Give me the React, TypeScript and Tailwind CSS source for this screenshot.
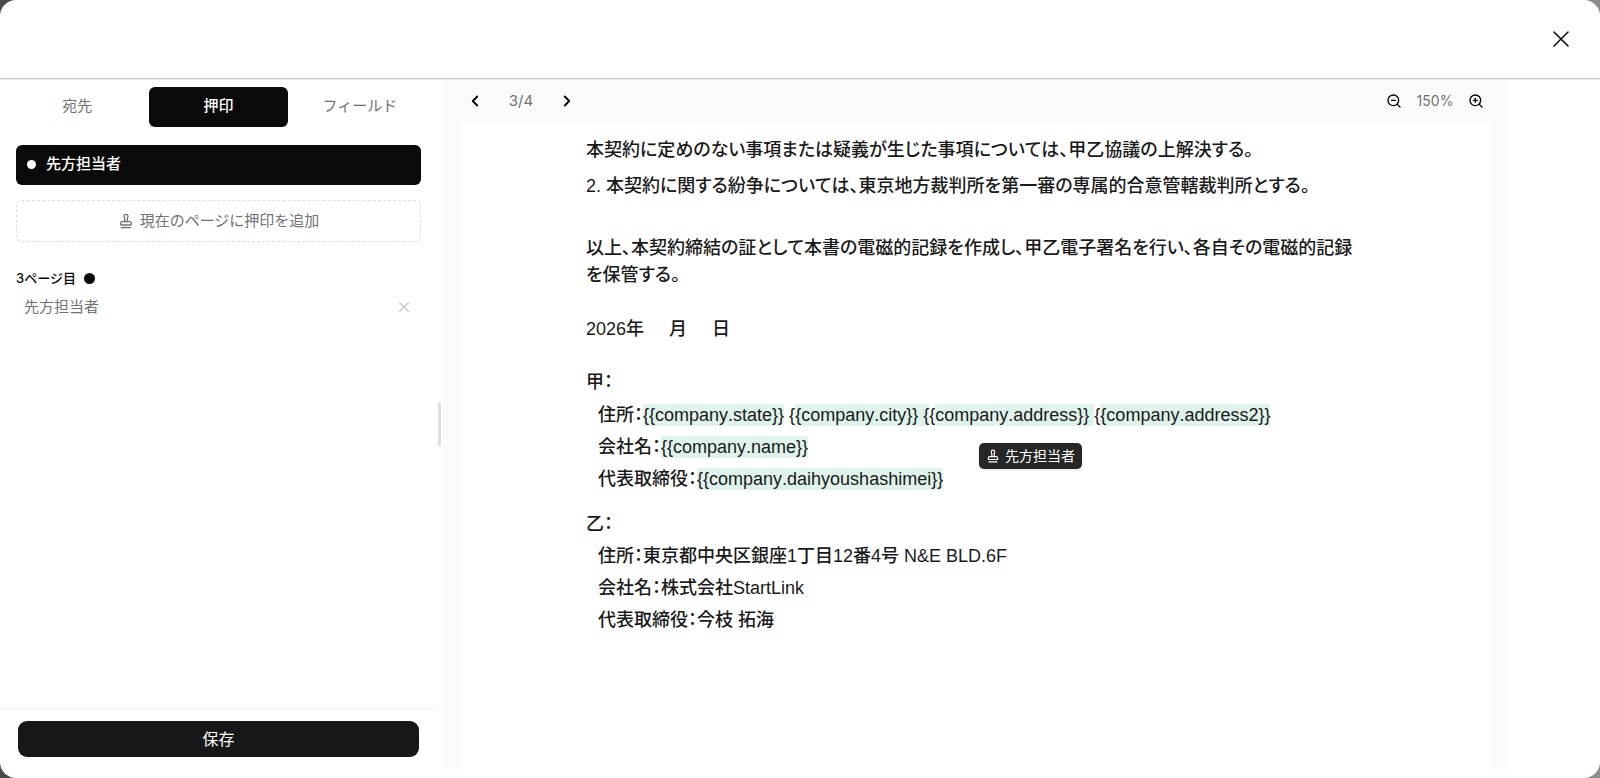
import { useState, type ReactNode } from 'react'
import { ChevronLeft, ChevronRight, Stamp, X, ZoomIn, ZoomOut } from 'lucide-react'

const TABS = ['宛先', '押印', 'フィールド']

function Mark({ children }: { children: ReactNode }) {
  return <span className="bg-[#dff2eb] py-px whitespace-pre">{children}</span>
}

function Sidebar() {
  const [tab, setTab] = useState('押印')

  return (
    <aside className="w-[437px] shrink-0 flex flex-col">
      <div className="grid grid-cols-3 gap-[3px] px-2 pt-[7px]" role="tablist">
        {TABS.map(name => (
          <button
            key={name}
            role="tab"
            aria-selected={tab === name}
            onClick={() => setTab(name)}
            className={
              tab === name
                ? 'h-10 rounded-md bg-[#0a0a0a] pb-[2px] text-[15px] font-medium text-white'
                : 'h-10 rounded-md pb-[2px] text-[15px] text-[#737373]'
            }
          >
            {name}
          </button>
        ))}
      </div>

      <div className="flex-1 px-4 pt-[18px]">
        <button className="w-full h-10 flex items-center gap-[10px] rounded-md bg-[#0a0a0a] px-[11px] pb-px text-[15px] font-medium text-white">
          <span className="size-[9px] rounded-full bg-white" />
          先方担当者
        </button>

        <button className="mt-[15px] w-full h-[42px] flex items-center justify-center gap-[6px] rounded-md border border-dashed border-[#dcdcdc] text-[15px] text-[#737373]">
          <Stamp size={16} />
          現在のページに押印を追加
        </button>

        {/* Stamps placed on this page */}
        <div className="mt-[26px] flex items-center gap-2">
          <h2 className="text-[13px] leading-5 font-medium text-[#0a0a0a]">3ページ目</h2>
          <span className="size-[11px] rounded-full bg-[#0a0a0a]" />
        </div>
        <div className="mt-[7px] flex items-center justify-between px-2">
          <span className="text-[15px] leading-6 text-[#737373]">先方担当者</span>
          <button aria-label="削除" className="text-[#c4c4c4]">
            <X size={18} strokeWidth={1.5} />
          </button>
        </div>
      </div>

      <div className="border-t border-[#f0f0f0] px-[18px] pt-3 pb-[21px]">
        <button className="w-full h-9 rounded-[9px] bg-[#171717] pb-px text-base text-white">保存</button>
      </div>
    </aside>
  )
}

function Toolbar() {
  return (
    <div className="h-[43px] flex items-center justify-between pl-[5px] pr-[6px] pb-px text-black">
      <div className="flex items-center">
        <button aria-label="前のページ"><ChevronLeft size={18} strokeWidth={2.5} /></button>
        <span className="w-[74px] text-center text-[15px] text-[#737373]">3/4</span>
        <button aria-label="次のページ"><ChevronRight size={18} strokeWidth={2.5} /></button>
      </div>
      <div className="flex items-center">
        <button aria-label="縮小"><ZoomOut size={16} /></button>
        <span className="w-[66px] text-center text-sm text-[#737373]">150%</span>
        <button aria-label="拡大"><ZoomIn size={16} /></button>
      </div>
    </div>
  )
}

function ContractPage() {
  return (
    <div className="relative flex-1 bg-white pl-[125px] pt-[14px] font-['Liberation_Sans','Noto_Sans_CJK_JP',sans-serif] text-[18px] leading-[27px] font-medium text-[#1a1a1a] whitespace-nowrap overflow-hidden [font-kerning:none] [font-feature-settings:'palt']">
      <p>本契約に定めのない事項または疑義が生じた事項については、甲乙協議の上解決する。</p>
      <p className="mt-[9px]">2. 本契約に関する紛争については、東京地方裁判所を第一審の専属的合意管轄裁判所とする。</p>

      <p className="mt-[35px]">
        以上、本契約締結の証として本書の電磁的記録を作成し、甲乙電子署名を行い、各自その電磁的記録
        <br />
        を保管する。
      </p>

      <p className="mt-[27px] whitespace-pre">2026年     月     日</p>

      <p className="mt-[26px]">甲：</p>
      <div className="pl-3 mt-[3px] leading-8">
        <p>
          住所：<Mark>{'{{company.state}}'}</Mark>
          {' {'}
          <Mark>{'{company.city}} {'}</Mark>
          {'{'}
          <Mark>{'company.address}} '}</Mark>
          {'{'}
          <Mark>{'{company.address2}}'}</Mark>
        </p>
        <p>会社名：<Mark>{'{{company.name}}'}</Mark></p>
        <p>代表取締役：<Mark>{'{{company.daihyoushashimei}}'}</Mark></p>
      </div>

      <p className="mt-4">乙：</p>
      <div className="pl-3 mt-[2px] leading-8">
        <p>住所：東京都中央区銀座1丁目12番4号 N&amp;E BLD.6F</p>
        <p>会社名：株式会社StartLink</p>
        <p>代表取締役：今枝 拓海</p>
      </div>

      <button className="absolute left-[518px] top-[320px] h-[26px] flex items-center gap-[5px] rounded-[5px] bg-[#262626] px-[7px] pb-px font-['Inter','Noto_Sans_CJK_JP',sans-serif] text-sm font-normal text-white shadow-sm [font-feature-settings:normal]">
        <Stamp size={14} />
        先方担当者
      </button>
    </div>
  )
}

export default function App() {
  return (
    <div className="h-screen bg-linear-to-r from-[#4a4a4a] to-[#8c8c8c] font-['Inter','Noto_Sans_CJK_JP',sans-serif]">
      <div className="h-full flex flex-col rounded-2xl bg-white overflow-hidden">
        <header className="h-[79px] mb-px shrink-0 flex items-center justify-end border-b border-[#cacaca] pr-[25px] shadow-[0_1px_0_#ececec]">
          <button aria-label="閉じる" className="text-black">
            <X size={28} strokeWidth={1.25} />
          </button>
        </header>

        <div className="flex-1 min-h-0 flex">
          <Sidebar />
          {/* Resize handle */}
          <div className="w-[6px] shrink-0 flex items-center pb-[10px]">
            <div className="w-[3px] h-11 ml-px rounded-full bg-[#dedede]" />
          </div>
          <main className="flex-1 min-w-0 flex flex-col mr-[92px] mb-[9px] bg-[#fafafa] px-[18px]">
            <Toolbar />
            <ContractPage />
          </main>
        </div>
      </div>
    </div>
  )
}
